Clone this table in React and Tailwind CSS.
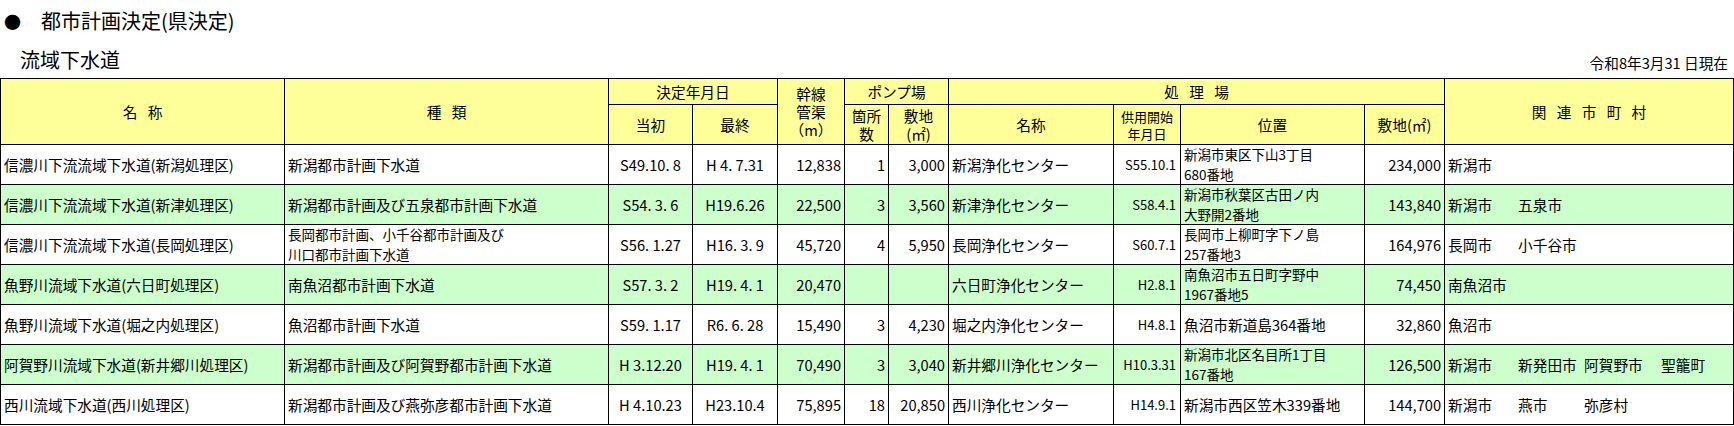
import React from 'react';

// 流域下水道 都市計画決定 一覧表
const rows = [
  {
    name: '信濃川下流流域下水道(新潟処理区)',
    kind: ['新潟都市計画下水道'],
    first: 'S49.10. 8',
    last: 'H 4. 7.31',
    pipe: '12,838',
    pumps: '1',
    pumpArea: '3,000',
    plant: '新潟浄化センター',
    start: 'S55.10.1',
    place: ['新潟市東区下山3丁目', '680番地'],
    area: '234,000',
    cities: ['新潟市'],
    green: false,
  },
  {
    name: '信濃川下流流域下水道(新津処理区)',
    kind: ['新潟都市計画及び五泉都市計画下水道'],
    first: 'S54. 3. 6',
    last: 'H19.6.26',
    pipe: '22,500',
    pumps: '3',
    pumpArea: '3,560',
    plant: '新津浄化センター',
    start: 'S58.4.1',
    place: ['新潟市秋葉区古田ノ内', '大野開2番地'],
    area: '143,840',
    cities: ['新潟市', '五泉市'],
    green: true,
  },
  {
    name: '信濃川下流流域下水道(長岡処理区)',
    kind: ['長岡都市計画、小千谷都市計画及び', '川口都市計画下水道'],
    first: 'S56. 1.27',
    last: 'H16. 3. 9',
    pipe: '45,720',
    pumps: '4',
    pumpArea: '5,950',
    plant: '長岡浄化センター',
    start: 'S60.7.1',
    place: ['長岡市上柳町字下ノ島', '257番地3'],
    area: '164,976',
    cities: ['長岡市', '小千谷市'],
    green: false,
  },
  {
    name: '魚野川流域下水道(六日町処理区)',
    kind: ['南魚沼都市計画下水道'],
    first: 'S57. 3. 2',
    last: 'H19. 4. 1',
    pipe: '20,470',
    pumps: '',
    pumpArea: '',
    plant: '六日町浄化センター',
    start: 'H2.8.1',
    place: ['南魚沼市五日町字野中', '1967番地5'],
    area: '74,450',
    cities: ['南魚沼市'],
    green: true,
  },
  {
    name: '魚野川流域下水道(堀之内処理区)',
    kind: ['魚沼都市計画下水道'],
    first: 'S59. 1.17',
    last: 'R6. 6. 28',
    pipe: '15,490',
    pumps: '3',
    pumpArea: '4,230',
    plant: '堀之内浄化センター',
    start: 'H4.8.1',
    place: ['魚沼市新道島364番地'],
    area: '32,860',
    cities: ['魚沼市'],
    green: false,
  },
  {
    name: '阿賀野川流域下水道(新井郷川処理区)',
    kind: ['新潟都市計画及び阿賀野都市計画下水道'],
    first: 'H 3.12.20',
    last: 'H19. 4. 1',
    pipe: '70,490',
    pumps: '3',
    pumpArea: '3,040',
    plant: '新井郷川浄化センター',
    start: 'H10.3.31',
    place: ['新潟市北区名目所1丁目', '167番地'],
    area: '126,500',
    cities: ['新潟市', '新発田市', '阿賀野市', '聖籠町'],
    green: true,
  },
  {
    name: '西川流域下水道(西川処理区)',
    kind: ['新潟都市計画及び燕弥彦都市計画下水道'],
    first: 'H 4.10.23',
    last: 'H23.10.4',
    pipe: '75,895',
    pumps: '18',
    pumpArea: '20,850',
    plant: '西川浄化センター',
    start: 'H14.9.1',
    place: ['新潟市西区笠木339番地'],
    area: '144,700',
    cities: ['新潟市', '燕市', '弥彦村'],
    green: false,
  },
];

const cityWidths = ['w-[70px]', 'w-[66px]', 'w-[77px]', 'w-auto'];

const th = 'border border-black bg-[#ffff99] font-normal p-0 text-center align-middle';
const td = 'border border-black p-0 align-middle';

function Spaced({ text }) {
  return <span className="[word-spacing:7px]">{text}</span>;
}

// 2行になるセルは行間を詰めて 40px の行に収める
function Lines({ lines }) {
  if (lines.length === 1) return <div>{lines[0]}</div>;
  return (
    <div className="text-[13.5px] leading-[19.5px]">
      {lines.map((l) => (
        <div key={l}>{l}</div>
      ))}
    </div>
  );
}

export default function App() {
  return (
    <div className="w-[1734px] h-[426px] bg-white text-black font-['Noto_Sans_CJK_JP',sans-serif] overflow-hidden">
      {/* 見出し */}
      <div className="h-[42px] flex items-center pl-[4px]">
        <span className="text-[17px] leading-none">●</span>
        <span className="ml-[20px] text-[20px] leading-none">都市計画決定(県決定)</span>
      </div>
      <div className="h-[36px] flex items-center justify-between">
        <span className="pl-[20px] text-[20px] leading-none">流域下水道</span>
        <span className="pr-[6px] pt-[6px] text-[14.67px] leading-none">令和8年3月31 日現在</span>
      </div>

      <table className="table-fixed border-collapse w-[1733px] text-[14.67px] leading-[18px]">
        <colgroup>
          <col className="w-[284px]" />
          <col className="w-[324px]" />
          <col className="w-[84px]" />
          <col className="w-[85px]" />
          <col className="w-[67px]" />
          <col className="w-[44px]" />
          <col className="w-[60px]" />
          <col className="w-[165px]" />
          <col className="w-[67px]" />
          <col className="w-[184px]" />
          <col className="w-[80px]" />
          <col className="w-[289px]" />
        </colgroup>
        <thead>
          <tr className="h-[26px]">
            <th rowSpan={2} className={th}><Spaced text="名 称" /></th>
            <th rowSpan={2} className={th}><Spaced text="種 類" /></th>
            <th colSpan={2} className={th}>決定年月日</th>
            <th rowSpan={2} className={th}>
              幹線<br />管渠<br />（m）
            </th>
            <th colSpan={2} className={th}>ポンプ場</th>
            <th colSpan={4} className={th}><Spaced text="処 理 場" /></th>
            <th rowSpan={2} className={th}><Spaced text="関 連 市 町 村" /></th>
          </tr>
          <tr className="h-[40px]">
            <th className={th}>当初</th>
            <th className={th}>最終</th>
            <th className={th}>箇所<br />数</th>
            <th className={th}>敷地<br />(㎡)</th>
            <th className={th}>名称</th>
            <th className={`${th} text-[13px] leading-[17px]`}>供用開始<br />年月日</th>
            <th className={th}>位置</th>
            <th className={th}>敷地(㎡)</th>
          </tr>
        </thead>
        <tbody>
          {rows.map((r) => (
            <tr key={r.name} className={`h-[40px] ${r.green ? 'bg-[#ccffcc]' : 'bg-white'}`}>
              <td className={`${td} pl-[3px] whitespace-nowrap`}>{r.name}</td>
              <td className={`${td} pl-[3px] whitespace-nowrap`}>
                <Lines lines={r.kind} />
              </td>
              <td className={`${td} text-center whitespace-pre`}>{r.first}</td>
              <td className={`${td} text-center whitespace-pre`}>{r.last}</td>
              <td className={`${td} text-right pr-[3px]`}>{r.pipe}</td>
              <td className={`${td} text-right pr-[3px]`}>{r.pumps}</td>
              <td className={`${td} text-right pr-[3px]`}>{r.pumpArea}</td>
              <td className={`${td} pl-[3px] whitespace-nowrap`}>{r.plant}</td>
              <td className={`${td} text-right pr-[4px] text-[13px]`}>{r.start}</td>
              <td className={`${td} pl-[3px] whitespace-nowrap`}>
                <Lines lines={r.place} />
              </td>
              <td className={`${td} text-right pr-[3px]`}>{r.area}</td>
              <td className={`${td} pl-[3px] whitespace-nowrap`}>
                <div className="flex">
                  {r.cities.map((c, i) => (
                    <span key={c} className={cityWidths[i]}>{c}</span>
                  ))}
                </div>
              </td>
            </tr>
          ))}
        </tbody>
      </table>
    </div>
  );
}
